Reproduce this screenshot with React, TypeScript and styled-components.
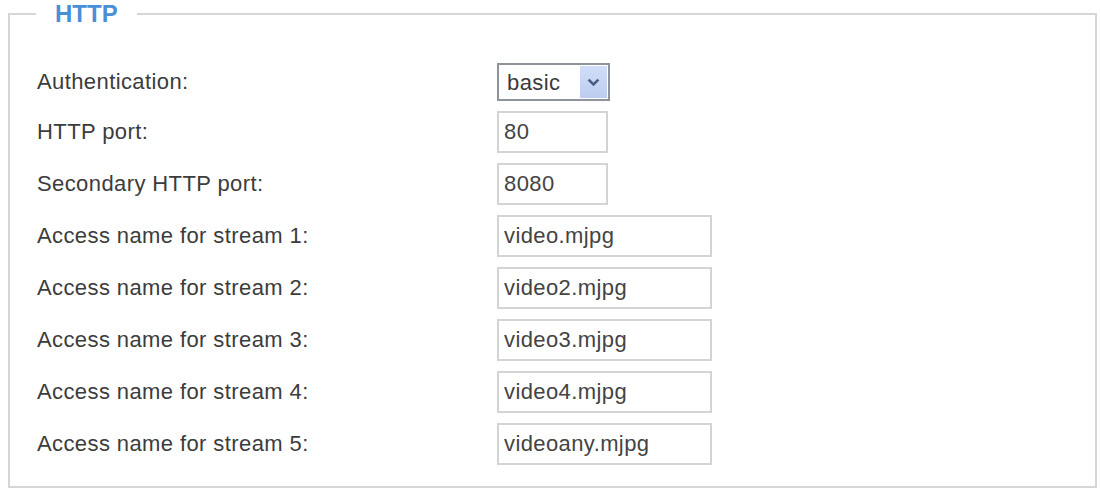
import { FC } from 'react';
import styled, { createGlobalStyle } from 'styled-components';

const GlobalStyle = createGlobalStyle`
  html, body {
    margin: 0;
    padding: 0;
    background: #ffffff;
  }
  body {
    font-family: 'Liberation Sans', Arial, sans-serif;
  }
`;

interface Field {
  label: string;
  value: string;
  wide?: boolean;
}

const fields: Field[] = [
  { label: 'HTTP port:', value: '80' },
  { label: 'Secondary HTTP port:', value: '8080' },
  { label: 'Access name for stream 1:', value: 'video.mjpg', wide: true },
  { label: 'Access name for stream 2:', value: 'video2.mjpg', wide: true },
  { label: 'Access name for stream 3:', value: 'video3.mjpg', wide: true },
  { label: 'Access name for stream 4:', value: 'video4.mjpg', wide: true },
  { label: 'Access name for stream 5:', value: 'videoany.mjpg', wide: true },
];

const App: FC = () => {
  return (
    <Page>
      <GlobalStyle />
      <Group>
        <Legend>HTTP</Legend>
        <Rows>
          <Row>
            <Label>Authentication:</Label>
            <SelectWrap>
              <Select defaultValue="basic">
                <option value="basic">basic</option>
                <option value="digest">digest</option>
              </Select>
              <ArrowButton>
                <svg width="13" height="9" viewBox="0 0 13 9">
                  <path
                    d="M1.6 1.6 L6.5 6.5 L11.4 1.6"
                    fill="none"
                    stroke="#4a5d86"
                    strokeWidth="2.6"
                  />
                </svg>
              </ArrowButton>
            </SelectWrap>
          </Row>
          {fields.map((f) => (
            <Row key={f.label}>
              <Label>{f.label}</Label>
              <TextInput type="text" defaultValue={f.value} $wide={f.wide} />
            </Row>
          ))}
        </Rows>
      </Group>
    </Page>
  );
};

export default App;

const Page = styled.div`
  padding: 0 4px 1px 8px;
`;

const Group = styled.fieldset`
  margin: 0;
  padding: 35px 0 21px 27px;
  border: 2px solid #d6d6d6;
  min-width: 0;
`;

const Legend = styled.legend`
  margin-left: -1px;
  padding: 0 19px 0 19px;
  font-size: 24px;
  line-height: 28px;
  font-weight: bold;
  color: #4a8fd6;
`;

const Rows = styled.div`
  display: flex;
  flex-direction: column;
  gap: 10px;
`;

const Row = styled.div`
  display: grid;
  grid-template-columns: 460px auto;
  align-items: center;
`;

const Label = styled.span`
  font-size: 22px;
  letter-spacing: 0.4px;
  color: #3c3c3c;
`;

const SelectWrap = styled.div`
  position: relative;
  width: 113px;
  height: 38px;
`;

const Select = styled.select`
  appearance: none;
  box-sizing: border-box;
  width: 113px;
  height: 38px;
  margin: 0;
  padding: 0 0 0 8px;
  border: 2px solid #8d949b;
  border-radius: 0;
  background: #ffffff;
  font-family: 'Liberation Sans', Arial, sans-serif;
  font-size: 22px;
  letter-spacing: 0.4px;
  color: #3a3a3a;
  outline: none;
`;

const ArrowButton = styled.span`
  position: absolute;
  top: 3px;
  right: 3px;
  width: 27px;
  height: 32px;
  display: flex;
  align-items: center;
  justify-content: center;
  background: linear-gradient(#d2def8, #bccdf1);
  pointer-events: none;
`;

const TextInput = styled.input<{ $wide?: boolean }>`
  box-sizing: border-box;
  width: ${(p) => (p.$wide ? '215px' : '111px')};
  height: 42px;
  margin: 0;
  padding: 0 0 0 5px;
  border: 2px solid #d4d4d4;
  border-radius: 0;
  background: #ffffff;
  font-family: 'Liberation Sans', Arial, sans-serif;
  font-size: 22px;
  letter-spacing: 0.4px;
  color: #444444;
  outline: none;
`;
